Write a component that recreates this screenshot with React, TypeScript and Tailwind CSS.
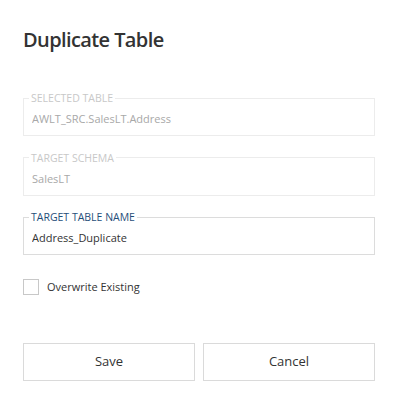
import React, { useState } from 'react'

const Field = ({
  label,
  value,
  disabled,
}: {
  label: string
  value: string
  disabled?: boolean
}) => {
  const [text, setText] = useState(value)
  return (
    <fieldset
      className={`border px-[5px] pt-[1px] pb-[3px] ${
        disabled ? 'border-[#ececec]' : 'border-[#dcdcdc]'
      }`}
    >
      <legend
        className={`px-[2px] text-[10.5px] leading-[12px] ${
          disabled ? 'text-[#c8c8c8]' : 'text-[#1f4e79]'
        }`}
      >
        {label}
      </legend>
      <input
        value={text}
        disabled={disabled}
        onChange={(e) => setText(e.target.value)}
        className={`block w-full h-[27px] pl-[3px] text-[11px] bg-transparent outline-none ${
          disabled ? 'text-[#a8a8a8]' : 'text-[#333333]'
        }`}
      />
    </fieldset>
  )
}

export default function App() {
  const [overwrite, setOverwrite] = useState(false)

  return (
    <div
      className="w-[398px] h-[410px] bg-white px-[23px] pt-[25px]"
      style={{ fontFamily: '"Open Sans", sans-serif' }}
    >
      <h1 className="text-[20px] leading-[30px] font-semibold tracking-[-0.6px] text-[#333333]">
        Duplicate Table
      </h1>

      <div className="mt-[37px] flex flex-col gap-[15.5px] w-[352px]">
        <Field label="SELECTED TABLE" value="AWLT_SRC.SalesLT.Address" disabled />
        <Field label="TARGET SCHEMA" value="SalesLT" disabled />
        <Field label="TARGET TABLE NAME" value="Address_Duplicate" />
      </div>

      <label className="mt-[24px] flex items-center gap-[8px] cursor-pointer w-fit">
        <button
          type="button"
          onClick={() => setOverwrite(!overwrite)}
          className="w-[16px] h-[16px] border border-[#c8c8c8] bg-white flex items-center justify-center"
        >
          {overwrite && (
            <svg viewBox="0 0 16 16" className="w-[12px] h-[12px]">
              <path d="M3 8l3 3 7-7" fill="none" stroke="#333" strokeWidth="1.5" />
            </svg>
          )}
        </button>
        <span className="text-[11px] text-[#333333]">Overwrite Existing</span>
      </label>

      <div className="mt-[47px] flex gap-[8px] w-[352px]">
        <button className="flex-1 h-[38px] border border-[#dadada] text-[13px] text-[#333333] hover:bg-gray-50">
          Save
        </button>
        <button className="flex-1 h-[38px] border border-[#dadada] text-[13px] text-[#333333] hover:bg-gray-50">
          Cancel
        </button>
      </div>
    </div>
  )
}
